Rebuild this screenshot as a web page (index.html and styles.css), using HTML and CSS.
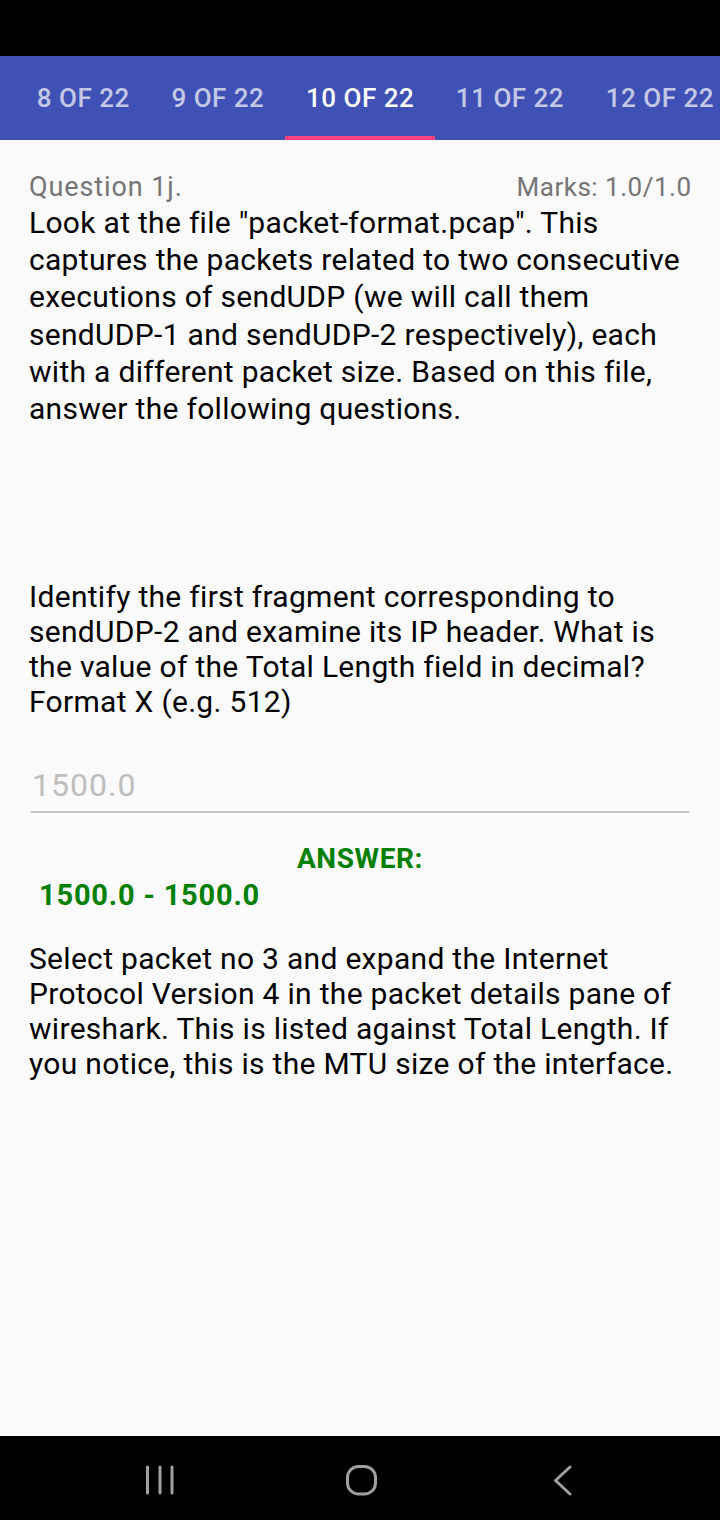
FILE: index.html
```html
<!DOCTYPE html>
<html>
<head>
<meta charset="utf-8">
<link rel="stylesheet" href="styles.css">
</head>
<body>
<div class="screen">
  <div class="status"></div>
  <div class="tabs">
    <div class="tab">8 OF 22</div>
    <div class="tab">9 OF 22</div>
    <div class="tab active">10 OF 22</div>
    <div class="tab">11 OF 22</div>
    <div class="tab">12 OF 22</div>
  </div>
  <div class="content">
    <div class="qhead">
      <span class="qnum">Question 1j.</span>
      <span class="marks">Marks: 1.0/1.0</span>
    </div>
    <p class="intro">Look at the file "packet-format.pcap". This captures the packets related to two consecutive executions of sendUDP (we will call them sendUDP-1 and sendUDP-2 respectively), each with a different packet size. Based on this file, answer the following questions.</p>
    <p class="question">Identify the first fragment corresponding to sendUDP-2 and examine its IP header. What is the value of the Total Length field in decimal? Format X (e.g. 512)</p>
    <div class="input">1500.0</div>
    <div class="answer-label">ANSWER:</div>
    <div class="answer-value">1500.0 - 1500.0</div>
    <p class="explain">Select packet no 3 and expand the Internet Protocol Version 4 in the packet details pane of wireshark. This is listed against Total Length. If you notice, this is the MTU size of the interface.</p>
  </div>
  <div class="navbar">
    <svg class="nav-icon" width="30" height="34" viewBox="0 0 30 34">
      <g stroke="#a0a0a0" stroke-width="3" stroke-linecap="round">
        <line x1="3.5" y1="4" x2="3.5" y2="30"/>
        <line x1="16" y1="4" x2="16" y2="30"/>
        <line x1="28" y1="4" x2="28" y2="30"/>
      </g>
    </svg>
    <svg class="nav-icon" width="34" height="34" viewBox="0 0 34 34">
      <rect x="3.5" y="3.5" width="28" height="27.5" rx="11" ry="11" fill="none" stroke="#a0a0a0" stroke-width="3"/>
    </svg>
    <svg class="nav-icon" width="24" height="34" viewBox="0 0 24 34">
      <polyline points="19,4 4.5,17.5 19,31" fill="none" stroke="#a0a0a0" stroke-width="3" stroke-linecap="round" stroke-linejoin="round"/>
    </svg>
  </div>
</div>
</body>
</html>
```

FILE: styles.css
```css
* { box-sizing: border-box; }
html, body { margin: 0; padding: 0; }
body {
  font-family: Roboto, "Noto Sans", sans-serif;
  background: #000;
}
.screen {
  width: 720px;
  height: 1520px;
  display: flex;
  flex-direction: column;
  background: #fafafa;
}
.status {
  height: 56px;
  background: #000;
  flex: none;
}
.tabs {
  height: 84px;
  flex: none;
  background: #3f51b5;
  display: flex;
  padding-left: 16px;
  overflow: hidden;
  white-space: nowrap;
}
.tab {
  flex: none;
  padding: 4px 20.8px 0 20.8px;
  display: flex;
  align-items: center;
  color: rgba(255,255,255,0.7);
  font-size: 26px;
  letter-spacing: 0.5px;
  font-weight: 500;
  border-bottom: 4px solid transparent;
}
.tab.active {
  color: #fff;
  border-bottom-color: #ff4081;
}
.content {
  flex: 1;
  padding: 30px 29px 0 29px;
  color: #000;
}
.qhead {
  display: flex;
  justify-content: space-between;
  align-items: baseline;
  line-height: 34px;
  color: #757575;
}
.qnum {
  font-size: 27px;
  letter-spacing: 0.9px;
}
.marks {
  font-size: 26px;
  letter-spacing: 0.5px;
  margin-right: -0.5px;
}
p { margin: 0; }
.intro {
  font-size: 30px;
  letter-spacing: 0.3px;
  line-height: 37.2px;
  margin-right: -8px;
}
.question {
  margin-top: 152px;
  font-size: 30px;
  letter-spacing: 0.3px;
  line-height: 35px;
  margin-right: -8px;
}
.input {
  margin: 45.5px 2px 0 2px;
  padding: 0 0 6px 1px;
  font-size: 32px;
  letter-spacing: 1px;
  line-height: 40px;
  color: #bdbdbd;
  border-bottom: 2px solid #c4c4c4;
}
.answer-label {
  margin-top: 28px;
  text-align: center;
  font-size: 28px;
  letter-spacing: 0.6px;
  line-height: 36px;
  font-weight: 700;
  color: #008000;
}
.answer-value {
  padding-left: 10px;
  font-size: 29px;
  letter-spacing: 0.8px;
  line-height: 36px;
  font-weight: 700;
  color: #008000;
}
.explain {
  margin-top: 28.5px;
  font-size: 30px;
  letter-spacing: 0.3px;
  line-height: 35px;
  margin-right: -8px;
}
.navbar {
  height: 84px;
  flex: none;
  background: #000;
  display: flex;
  align-items: center;
  padding: 4px 0 0 144px;
  gap: 170px;
}
.navbar .nav-icon:last-child { margin-left: 3px; }
.nav-icon { display: block; }
```
